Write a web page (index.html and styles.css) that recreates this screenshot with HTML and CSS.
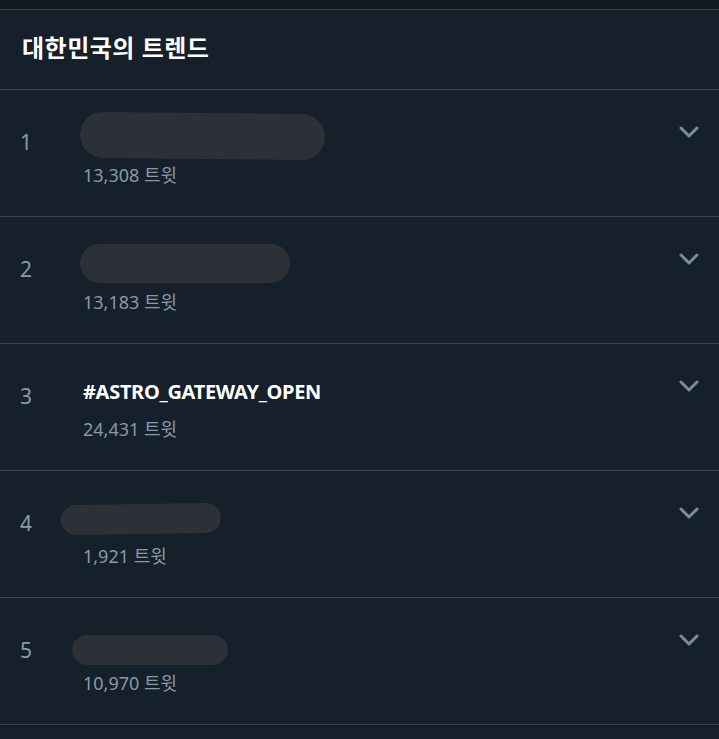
FILE: index.html
```html
<!DOCTYPE html>
<html lang="ko">
  <head>
    <meta charset="UTF-8" />
    <meta name="viewport" content="width=device-width, initial-scale=1.0" />
    <title>대한민국의 트렌드</title>
    <link rel="stylesheet" href="styles.css">
  </head>
  <body>
    <div class="topbar"></div>
    <header class="head">
      <h2>대한민국의 트렌드</h2>
    </header>
    <ul class="trends">
      <li class="trend">
        <span class="rank">1</span>
        <div class="info">
          <div class="name"><span class="blot blot1"></span></div>
          <p class="count">13,308 트윗</p>
        </div>
        <svg class="more" viewBox="0 0 20 12"><path d="M2 2l8 8 8-8" /></svg>
      </li>
      <li class="trend">
        <span class="rank">2</span>
        <div class="info">
          <div class="name"><span class="blot blot2"></span></div>
          <p class="count">13,183 트윗</p>
        </div>
        <svg class="more" viewBox="0 0 20 12"><path d="M2 2l8 8 8-8" /></svg>
      </li>
      <li class="trend">
        <span class="rank">3</span>
        <div class="info">
          <div class="name">#ASTRO_GATEWAY_OPEN</div>
          <p class="count">24,431 트윗</p>
        </div>
        <svg class="more" viewBox="0 0 20 12"><path d="M2 2l8 8 8-8" /></svg>
      </li>
      <li class="trend">
        <span class="rank">4</span>
        <div class="info">
          <div class="name"><span class="blot blot4"></span></div>
          <p class="count">1,921 트윗</p>
        </div>
        <svg class="more" viewBox="0 0 20 12"><path d="M2 2l8 8 8-8" /></svg>
      </li>
      <li class="trend">
        <span class="rank">5</span>
        <div class="info">
          <div class="name"><span class="blot blot5"></span></div>
          <p class="count">10,970 트윗</p>
        </div>
        <svg class="more" viewBox="0 0 20 12"><path d="M2 2l8 8 8-8" /></svg>
      </li>
    </ul>
  </body>
</html>
```

FILE: styles.css
```css
* {
  margin: 0;
  padding: 0;
  box-sizing: border-box;
}

body {
  background-color: #16202b;
  color: #8899a6;
  font-family: "Noto Sans", "Noto Sans CJK KR", sans-serif;
}

.topbar {
  height: 10px;
  background-color: #111820;
  border-bottom: 1px solid #37424c;
}

.head {
  height: 80px;
  padding: 0 22px;
  display: flex;
  align-items: center;
  border-bottom: 1px solid #37424c;
}

.head h2 {
  color: #fff;
  font-size: 24px;
  font-weight: 700;
  line-height: 30px;
  margin-top: -3px;
  letter-spacing: 0.5px;
}

.trends {
  list-style: none;
}

.trend {
  display: flex;
  height: 127px;
  border-bottom: 1px solid #37424c;
}

.rank {
  width: 83px;
  padding: 39px 0 0 20px;
  font-size: 21px;
  line-height: 26px;
}

.info {
  flex: 1;
  padding-top: 35px;
}

.name {
  display: flow-root;
  height: 26px;
  line-height: 26px;
  color: #fff;
  font-size: 20px;
  font-weight: 700;
  letter-spacing: -0.3px;
}

.blot {
  display: block;
  background-color: #2b3137;
  border-radius: 24px;
}

.blot1 {
  width: 245px;
  height: 46px;
  margin: -12px 0 0 -3px;
  transform: rotate(0.6deg);
}

.blot2 {
  width: 210px;
  height: 39px;
  margin: -8px 0 0 -3px;
}

.blot4 {
  width: 160px;
  height: 30px;
  margin: -2px 0 0 -22px;
  transform: rotate(-0.8deg);
}

.blot5 {
  width: 156px;
  height: 30px;
  margin: 2px 0 0 -11px;
}

.count {
  margin-top: 11px;
  font-size: 18px;
  line-height: 26px;
}

.more {
  width: 20px;
  height: 12px;
  margin: 36px 20px 0 0;
  fill: none;
  stroke: #7b8c99;
  stroke-width: 3;
  stroke-linecap: round;
  stroke-linejoin: round;
}
```
